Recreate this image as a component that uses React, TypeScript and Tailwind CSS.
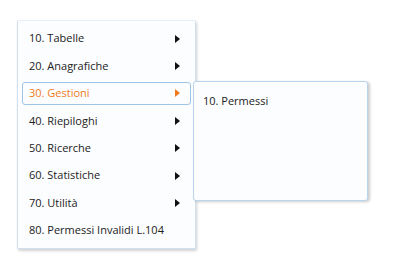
import * as React from "react";

interface MenuItem {
  label: string;
  hasChildren?: boolean;
}

const items: MenuItem[] = [
  { label: "10. Tabelle", hasChildren: true },
  { label: "20. Anagrafiche", hasChildren: true },
  { label: "30. Gestioni", hasChildren: true },
  { label: "40. Riepiloghi", hasChildren: true },
  { label: "50. Ricerche", hasChildren: true },
  { label: "60. Statistiche", hasChildren: true },
  { label: "70. Utilità", hasChildren: true },
  { label: "80. Permessi Invalidi L.104" },
];

const activeIndex = 2;

function Arrow({ active }: { active?: boolean }) {
  return (
    <svg width="5" height="8" viewBox="0 0 5 8" className="shrink-0">
      <path d="M0 0 L5 4 L0 8 Z" fill={active ? "#f07a1c" : "#111111"} />
    </svg>
  );
}

export default function App() {
  return (
    <div
      className="w-[400px] h-[280px] bg-white relative overflow-hidden"
      style={{ fontFamily: '"Open Sans", "Liberation Sans", sans-serif' }}
    >
      <div className="pt-[20px] pl-[17px]">
        {/* Main menu */}
        <div className="relative w-[179px] h-[229px] bg-[#fcfdfe] border border-[#cfe1f1] border-t-[#e6eff8] rounded-[2px] pt-[4px] shadow-[1px_2px_3px_rgba(0,0,0,0.18)]">
          {items.map((item, i) => {
            const active = i === activeIndex;
            return (
              <div key={item.label} className="h-[27.4px] px-[4px] py-[2px]">
                <div
                  className={
                    "h-full flex items-center justify-between pl-[6px] pr-[10px] rounded-[3px] border text-[11px] " +
                    (active
                      ? "border-[#9fc5e6] bg-[#fbfdff] text-[#f07a1c]"
                      : "border-transparent text-[#222222]")
                  }
                >
                  <span>{item.label}</span>
                  {item.hasChildren && <Arrow active={active} />}
                </div>
              </div>
            );
          })}

          {/* Sub menu */}
          <div className="absolute left-[175px] top-[60px] w-[175px] h-[120px] bg-[#fcfdfe] border border-[#b9d5ee] rounded-[3px] shadow-[2px_1px_3px_rgba(0,0,0,0.2)] pt-[10px] pl-[9px]">
            <div className="h-[19px] flex items-center text-[11px] text-[#222222]">
              10. Permessi
            </div>
          </div>
        </div>
      </div>
    </div>
  );
}
